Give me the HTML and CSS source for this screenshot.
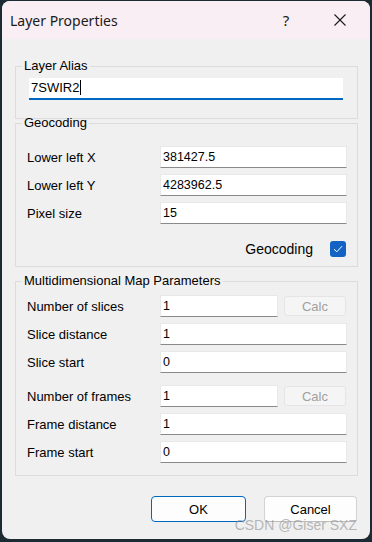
FILE: index.html
```html
<!DOCTYPE html>
<html>
<head>
  <title>Layer Properties</title>
  <link rel="stylesheet" href="styles.css">
</head>
<body>
  <div class="janela">
    <div class="barra-titulo">
      <span class="titulo">Layer Properties</span>
      <span class="botao-ajuda">?</span>
      <span class="botao-fechar">
        <svg width="12" height="12" viewBox="0 0 12 12"><path d="M0.5 0.5 L11.5 11.5 M11.5 0.5 L0.5 11.5" stroke="#1a1a1a" stroke-width="1.1" fill="none"/></svg>
      </span>
    </div>

    <div class="conteudo">
      <fieldset class="grupo grupo-alias">
        <legend>Layer Alias</legend>
        <div class="grupo-corpo">
          <div class="campo-alias">7SWIR2<span class="cursor"></span></div>
        </div>
      </fieldset>

      <fieldset class="grupo grupo-geo">
        <legend>Geocoding</legend>
        <div class="grupo-corpo">
          <div class="linha">
            <label>Lower left X</label>
            <input class="campo" type="text" value="381427.5">
          </div>
          <div class="linha">
            <label>Lower left Y</label>
            <input class="campo" type="text" value="4283962.5">
          </div>
          <div class="linha">
            <label>Pixel size</label>
            <input class="campo" type="text" value="15">
          </div>
          <div class="linha-check">
            <span>Geocoding</span>
            <span class="check">
              <svg width="10" height="8" viewBox="0 0 10 8"><path d="M1 4.2 L3.8 6.8 L9 1.2" stroke="#fff" stroke-width="1" fill="none"/></svg>
            </span>
          </div>
        </div>
      </fieldset>

      <fieldset class="grupo grupo-multi">
        <legend>Multidimensional Map Parameters</legend>
        <div class="grupo-corpo">
          <div class="linha linha-calc">
            <label>Number of slices</label>
            <input class="campo" type="text" value="1">
            <button class="botao-calc" disabled>Calc</button>
          </div>
          <div class="linha">
            <label>Slice distance</label>
            <input class="campo" type="text" value="1">
          </div>
          <div class="linha">
            <label>Slice start</label>
            <input class="campo" type="text" value="0">
          </div>
          <div class="linha linha-calc separada">
            <label>Number of frames</label>
            <input class="campo" type="text" value="1">
            <button class="botao-calc" disabled>Calc</button>
          </div>
          <div class="linha">
            <label>Frame distance</label>
            <input class="campo" type="text" value="1">
          </div>
          <div class="linha">
            <label>Frame start</label>
            <input class="campo" type="text" value="0">
          </div>
        </div>
      </fieldset>

      <div class="botoes">
        <button class="botao botao-ok">OK</button>
        <button class="botao">Cancel</button>
      </div>
    </div>

    <div class="marca">CSDN @Giser SXZ</div>
  </div>
</body>
</html>
```

FILE: styles.css
```css
/* Fundo escuro atrás da janela */
body {
  margin: 0;
  background-color: #1c2a33;
  font-family: "Liberation Sans", Arial, sans-serif;
  font-size: 13px;
  color: #000;
}

.janela {
  position: relative;
  width: 368px;
  height: 538px;
  margin: 1px 2px 3px 2px;
  background-color: #f0f0f0;
  border-radius: 8px;
  overflow: hidden;
}

/* Barra de título */
.barra-titulo {
  display: flex;
  align-items: center;
  height: 38px;
  padding-left: 8px;
  background-color: #f9eef4;
}

.titulo {
  flex: 1;
  font-family: "Noto Sans", sans-serif;
  font-size: 14px;
  color: #1a1a1a;
}

.botao-ajuda {
  width: 30px;
  margin-right: 16px;
  text-align: center;
  font-family: "Noto Sans", sans-serif;
  font-size: 15px;
  color: #1a1a1a;
}

.botao-fechar {
  display: flex;
  justify-content: center;
  align-items: center;
  width: 46px;
  height: 38px;
  margin-right: 7px;
}

.conteudo {
  padding: 23px 12px 0 13px;
}

/* Caixas de grupo */
.grupo {
  margin: 0;
  padding: 0;
  border: 1px solid #dcdcdc;
  min-width: 0;
}

.grupo legend {
  padding: 0 2px;
  margin-left: 6px;
  line-height: 8px;
  font-size: 13px;
}

.grupo-alias .grupo-corpo {
  padding: 8px 14px 18px 13px;
}

.grupo-geo .grupo-corpo {
  padding: 19px 10px 9px 11px;
}

.grupo-multi {
  margin-top: 10px;
}

.grupo-multi .grupo-corpo {
  padding: 10px 10px 12px 11px;
}

.campo-alias {
  height: 22px;
  box-sizing: border-box;
  padding-left: 2px;
  background-color: #fff;
  border-bottom: 2px solid #0067c0;
  line-height: 20px;
  font-size: 13px;
}

.cursor {
  display: inline-block;
  width: 1px;
  height: 15px;
  margin-left: 1px;
  vertical-align: -3px;
  background-color: #000;
}

/* Linhas de campos */
.linha {
  display: grid;
  grid-template-columns: 133px 1fr;
  align-items: center;
  height: 22px;
  margin-bottom: 6px;
}

.linha:last-child {
  margin-bottom: 0;
}

.linha-calc {
  grid-template-columns: 133px 118px 1fr;
}

.linha.separada {
  margin-top: 12px;
}

.campo {
  height: 22px;
  box-sizing: border-box;
  width: 100%;
  margin: 0;
  padding: 0 2px;
  border: 1px solid #e8e8e8;
  border-bottom-color: #8a8a8a;
  background-color: #fff;
  font-family: "Liberation Sans", Arial, sans-serif;
  font-size: 12.5px;
  color: #000;
  outline: none;
}

.botao-calc {
  height: 20px;
  margin: 0 1px 0 6px;
  padding: 0;
  border: 1px solid #e5e5e5;
  border-radius: 3px;
  background-color: #f5f5f5;
  font-family: "Liberation Sans", Arial, sans-serif;
  font-size: 13px;
  color: #a0a0a0;
}

.linha-check {
  display: flex;
  justify-content: flex-end;
  align-items: center;
  gap: 17px;
  height: 16px;
  margin-top: 17px;
  margin-right: 1px;
  font-size: 14px;
}

.check {
  display: flex;
  justify-content: center;
  align-items: center;
  width: 16px;
  height: 16px;
  border-radius: 3px;
  background-color: #1363c4;
}

/* Botões de baixo */
.botoes {
  display: flex;
  justify-content: flex-end;
  gap: 18px;
  margin-top: 20px;
  margin-right: 1px;
}

.botao {
  width: 93px;
  height: 26px;
  padding: 0;
  border: 1px solid #d3d3d3;
  border-bottom-color: #bcbcbc;
  border-radius: 4px;
  background-color: #fdfdfd;
  font-family: "Liberation Sans", Arial, sans-serif;
  font-size: 13px;
  color: #000;
}

.botao-ok {
  width: 95px;
  border-color: #0067c0;
}

.marca {
  position: absolute;
  right: 13px;
  bottom: 6px;
  font-size: 14px;
  color: rgba(140, 140, 140, 0.6);
}
```
